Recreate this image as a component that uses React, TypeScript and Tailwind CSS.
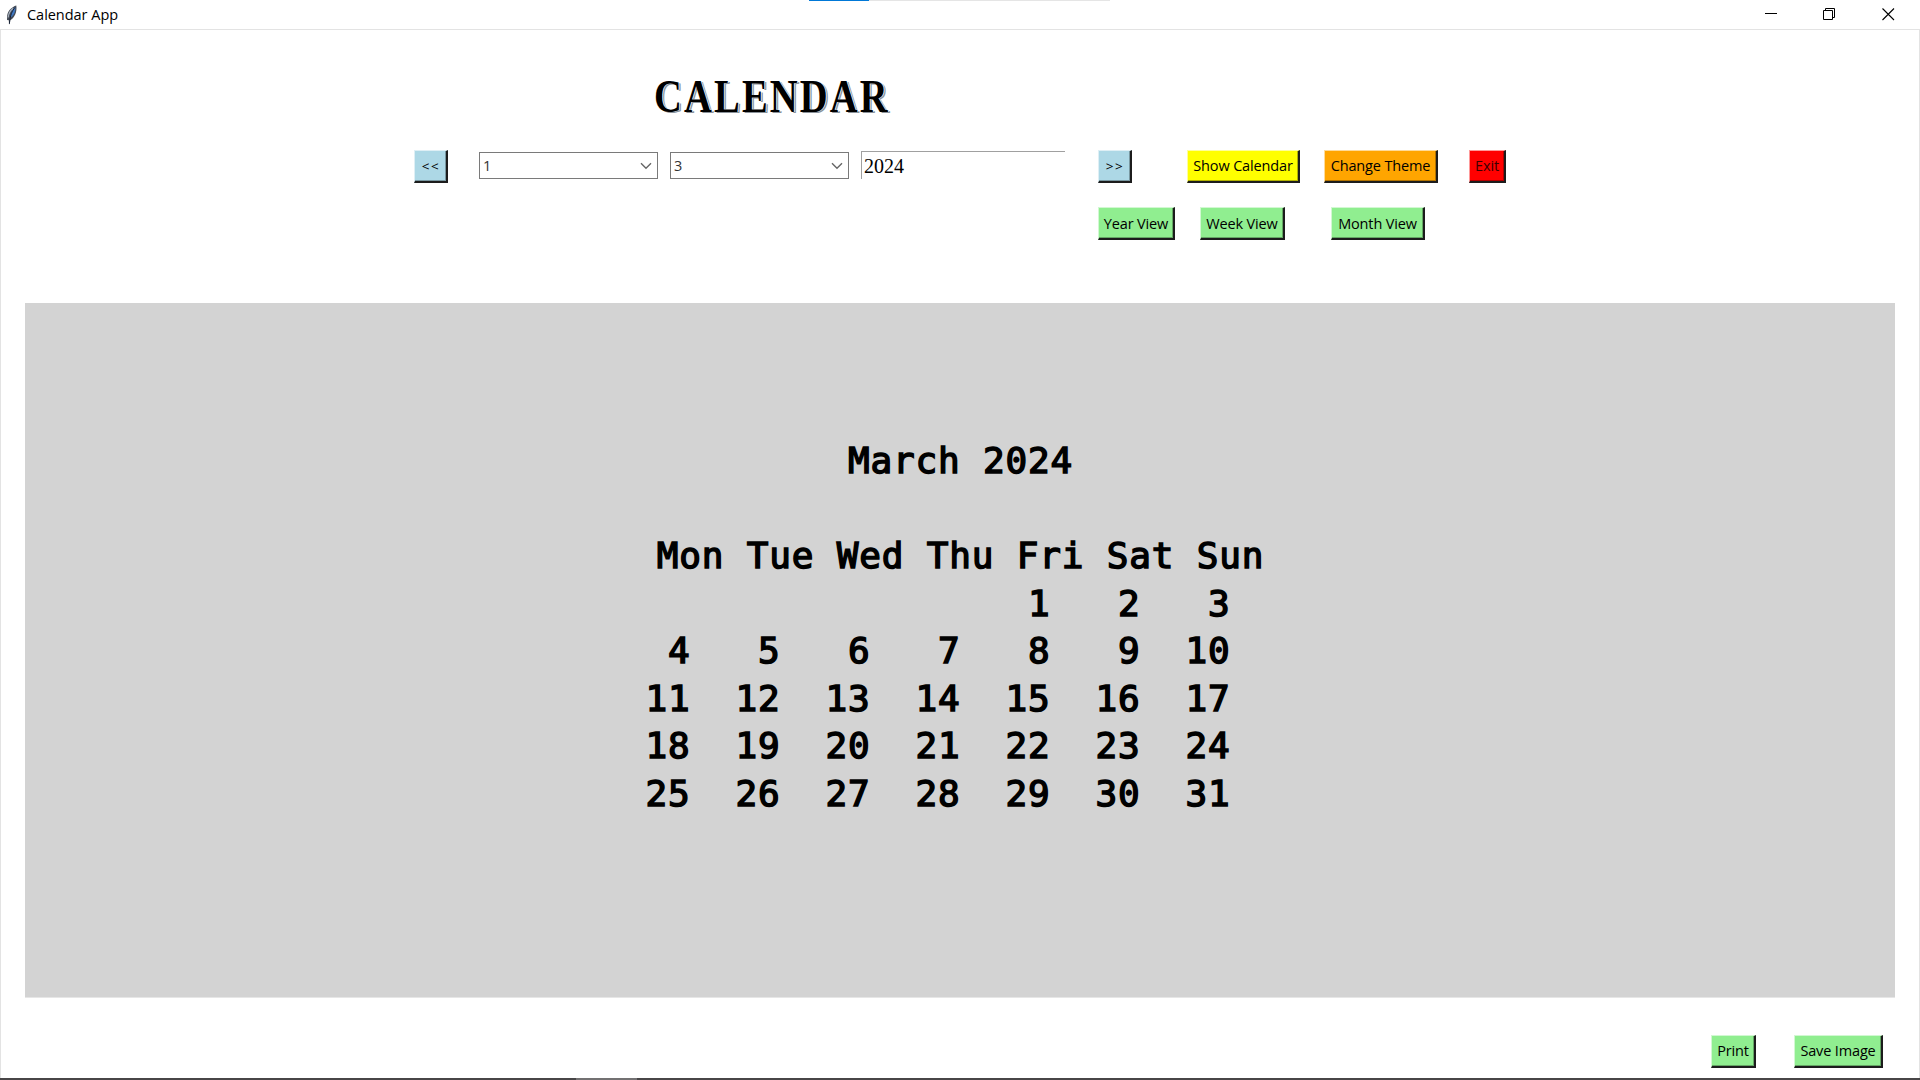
import React from "react";

const calendarLines = [
  "March 2024",
  " ",
  "Mon Tue Wed Thu Fri Sat Sun",
  "                 1   2   3  ",
  " 4   5   6   7   8   9  10  ",
  "11  12  13  14  15  16  17  ",
  "18  19  20  21  22  23  24  ",
  "25  26  27  28  29  30  31  ",
];

function TkButton({ label, className }: { label: string; className: string }) {
  return (
    <button
      className={`flex h-[33px] shrink-0 items-center justify-center border-t border-l border-r-2 border-b-2 border-t-white/60 border-l-white/60 border-r-[#1c1c1c] border-b-[#1c1c1c] whitespace-nowrap shadow-[inset_-1px_-1px_0_rgba(0,0,0,0.3)] ${className}`}
    >
      {label}
    </button>
  );
}

function Combo({ value, className }: { value: string; className: string }) {
  return (
    <div
      className={`flex h-[27px] w-[179px] shrink-0 items-center justify-between border border-[#7a7a7a] bg-white pr-[5px] pl-[3px] ${className}`}
    >
      <span className="pt-px text-[#333]">{value}</span>
      <svg width="12" height="8" viewBox="0 0 12 8" fill="none" stroke="#666" strokeWidth="1.4">
        <path d="M1 1.2 6 6.2 11 1.2" />
      </svg>
    </div>
  );
}

function Feather() {
  return (
    <svg width="12" height="20" viewBox="0 0 12 20">
      <path d="M10.3.6C6 2 2.200 5.500 1.200 10.200L1 15l1.800.3.2 3.900.9-.1.3-3.900C8.500 13.300 11.300 7 10.300.6Z" fill="#454b55" />
      <path d="M9.300 2C6.500 3.500 5 7 4.500 12.500 7.800 10.500 9.700 6.500 9.300 2Z" fill="#3f78c2" />
      <path d="M7.200 3.300C4.300 5.400 2.600 8 2.200 12.500" fill="none" stroke="#a8b2bf" strokeWidth="1.100" />
      <path d="M9 2.500C6 6 4.200 10 3.400 18.500" fill="none" stroke="#172236" strokeWidth="1" />
    </svg>
  );
}

export default function App() {
  return (
    <div className="flex h-[1080px] w-[1920px] flex-col overflow-hidden bg-white font-['Open_Sans','Noto_Sans',sans-serif] text-[14.5px] leading-[20px] text-black">
      <header className="relative flex h-[29px] shrink-0 items-center justify-between pr-[25px] pl-[6px]">
        <div className="absolute top-0 left-[809px] flex h-px w-[301px] bg-[#e5e5e5]">
          <div className="w-[60px] bg-[#0078d7]" />
        </div>
        <div className="flex items-center gap-[9px]">
          <Feather />
          <span className="tracking-[-0.03px]">Calendar App</span>
        </div>
        <div className="flex items-center">
          <svg className="mr-[45px]" width="13" height="13" viewBox="0 0 13 13">
            <path d="M0 5.500H12" stroke="#000" />
          </svg>
          <svg className="mr-[46px]" width="13" height="13" viewBox="0 0 13 13" fill="none" stroke="#000">
            <path d="M.5 2.500H9.500V11.500H.5ZM2.500 2.500V.5H11.500V9.500H9.500" />
          </svg>
          <svg width="13" height="13" viewBox="0 0 13 13" stroke="#000" strokeWidth="1.100">
            <path d="M.5.5 12 12M12 .5.5 12" />
          </svg>
        </div>
      </header>

      <main className="flex grow flex-col border-x border-t border-[#e3e3e3] px-[24px]">
        <h1 className="mt-[40px] ml-[629px] h-[54px] font-['Liberation_Serif',serif] text-[46px] leading-[54px] font-bold whitespace-nowrap [text-shadow:1px_0_0_#fff,2.5px_0.5px_0.5px_#8a929a]">
          <span className="inline-block origin-left scale-x-[0.84] tracking-[2.5px]">CALENDAR</span>
        </h1>

        <div className="mt-[26px] flex h-[33px] pl-[389px] tracking-[-0.15px]">
          <TkButton label="<<" className="w-[34px] bg-[#add8e6] pr-px pl-[2px] text-[13.5px] tracking-[1.5px]" />
          <Combo value="1" className="mt-[2px] ml-[31px]" />
          <Combo value="3" className="mt-[2px] ml-[12px]" />
          <div className="mt-px ml-[12px] flex h-[28px] w-[204px] items-center border-t border-l border-[#a0a0a0] pt-px pl-[2px] font-['Liberation_Serif',serif] text-[20px] tracking-normal">
            2024
          </div>
          <TkButton label=">>" className="ml-[33px] w-[34px] bg-[#add8e6] pr-px pl-[2px] text-[13.5px] tracking-[1.5px]" />
          <TkButton label="Show Calendar" className="ml-[55px] w-[113px] bg-[#ffff00]" />
          <TkButton label="Change Theme" className="ml-[24px] w-[114px] bg-[#ffa500]" />
          <TkButton label="Exit" className="ml-[31px] w-[37px] bg-[#ff0000] text-[#3a0000]" />
        </div>

        <div className="mt-[24px] flex h-[33px] pl-[1073px] tracking-[-0.15px]">
          <TkButton label="Year View" className="w-[77px] bg-[#90ee90] pt-[2px]" />
          <TkButton label="Week View" className="ml-[25px] w-[85px] bg-[#90ee90] pt-[2px]" />
          <TkButton label="Month View" className="ml-[46px] w-[94px] bg-[#90ee90] pt-[2px]" />
        </div>

        <section className="mt-[63px] flex h-[695px] shrink-0 flex-col items-center border-b border-[#e6e6e6] bg-[#d3d3d3] pt-[134px] pl-px font-['DejaVu_Sans_Mono',monospace] text-[36px] leading-[47.5px] tracking-[0.83px] [-webkit-text-stroke:1.5px_black]">
          {calendarLines.map((line, i) => (
            <div key={i} className="h-[47.5px] whitespace-pre">
              {line}
            </div>
          ))}
        </section>

        <div className="mt-[37px] flex justify-end pr-[12px] tracking-[-0.15px]">
          <TkButton label="Print" className="w-[45px] bg-[#90ee90]" />
          <TkButton label="Save Image" className="ml-[38px] w-[89px] bg-[#90ee90]" />
        </div>
      </main>

      <footer className="flex h-[2px] shrink-0 bg-[#484647] pl-[576px]">
        <div className="w-[61px] bg-[#737172]" />
      </footer>
    </div>
  );
}
